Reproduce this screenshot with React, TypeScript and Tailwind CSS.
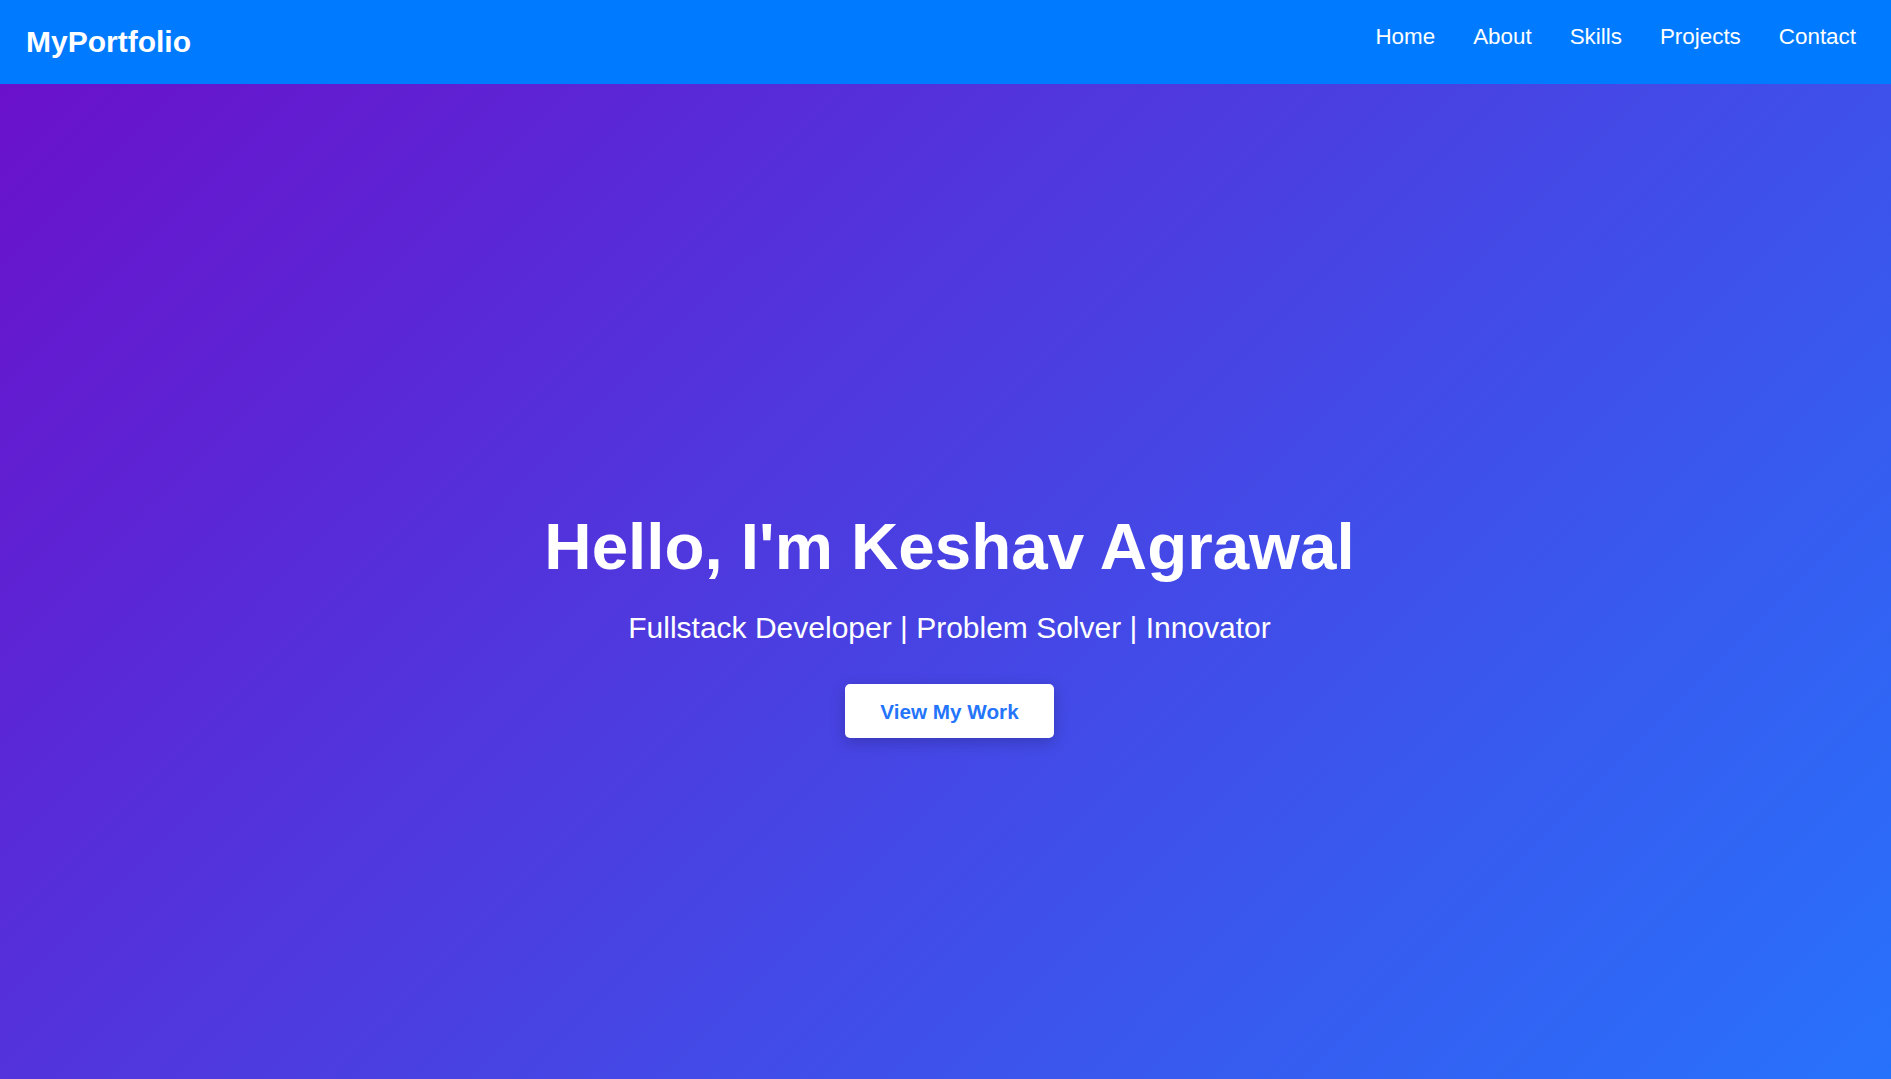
const links = ["Home", "About", "Skills", "Projects", "Contact"];

export default function App() {
  return (
    <div className="font-['Liberation_Sans',Arial,sans-serif] text-white">
      <nav className="h-[84px] flex items-center justify-between pl-[26px] pr-[35px] bg-[#007bff]">
        <span className="text-[30px] font-bold leading-none">MyPortfolio</span>
        <ul className="flex gap-[38px] pb-[8px]">
          {links.map((l) => (
            <li key={l}>
              <a href="#" className="text-[22.4px] leading-none">
                {l}
              </a>
            </li>
          ))}
        </ul>
      </nav>

      <section className="min-h-screen pl-[8px] flex flex-col items-center justify-center text-center bg-[linear-gradient(135deg,#6a11cb,#2575fc)]">
        <h1 className="text-[65.5px] font-bold leading-[1.15] mb-[27px]">Hello, I'm Keshav Agrawal</h1>
        <p className="text-[30px] leading-[1.15] mb-[39px]">
          Fullstack Developer | Problem Solver | Innovator
        </p>
        <a
          href="#"
          className="h-[54px] px-[35px] flex items-center rounded-[5px] bg-white text-[#2575fc] text-[20.7px] font-bold shadow-[0_4px_15px_rgba(0,0,0,0.2)]"
        >
          View My Work
        </a>
      </section>
    </div>
  );
}
